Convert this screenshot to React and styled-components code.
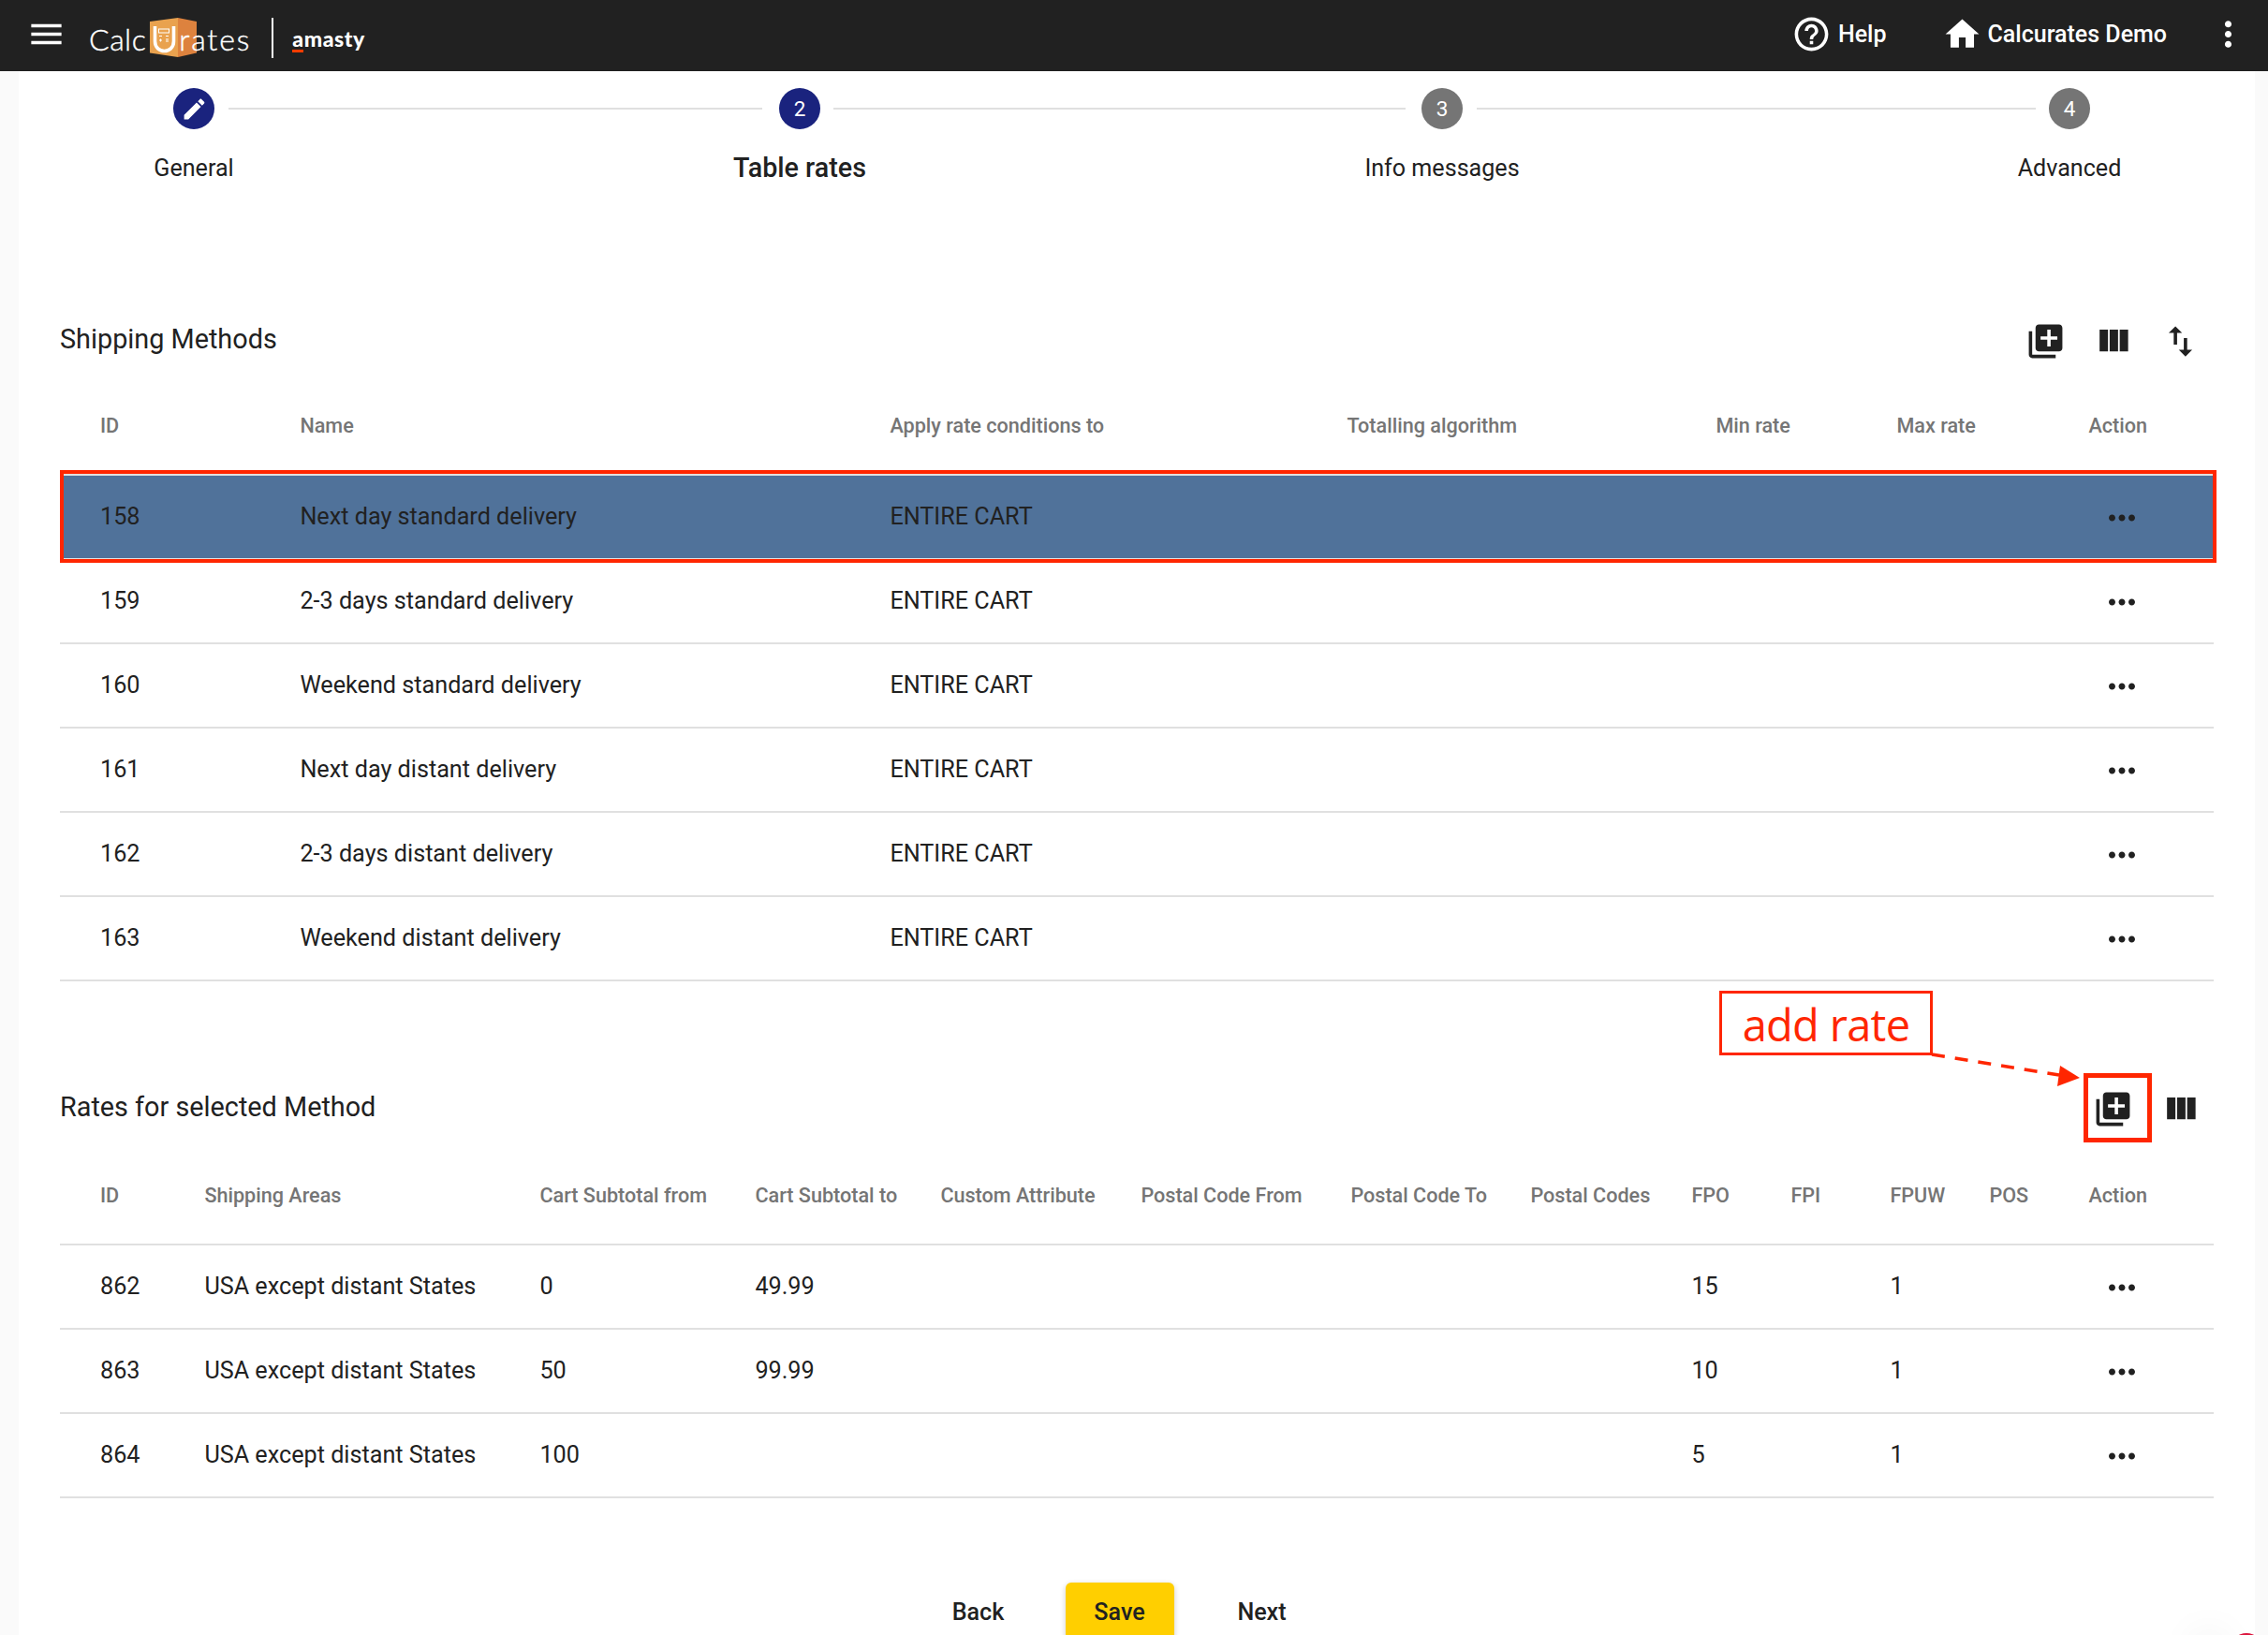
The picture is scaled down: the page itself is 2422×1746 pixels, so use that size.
import React from 'react'
import styled, { createGlobalStyle } from 'styled-components'

const GlobalStyle = createGlobalStyle`
  html, body { margin: 0; padding: 0; height: 100%; overflow: hidden; background: #fafafa; }
  body { font-family: Roboto, "Liberation Sans", sans-serif; color: #212121; }
`

const RED = '#ff2600'

const paths = {
  menu: 'M3 18h18v-2H3v2zm0-5h18v-2H3v2zm0-7v2h18V6H3z',
  help: 'M11 18h2v-2h-2v2zm1-16C6.48 2 2 6.48 2 12s4.48 10 10 10 10-4.48 10-10S17.52 2 12 2zm0 18c-4.41 0-8-3.59-8-8s3.59-8 8-8 8 3.59 8 8-3.59 8-8 8zm0-14c-2.21 0-4 1.79-4 4h2c0-1.1.9-2 2-2s2 .9 2 2c0 2-3 1.75-3 5h2c0-2.25 3-2.5 3-5 0-2.21-1.79-4-4-4z',
  home: 'M10 20v-6h4v6h5v-8h3L12 3 2 12h3v8z',
  moreVert: 'M12 8c1.1 0 2-.9 2-2s-.9-2-2-2-2 .9-2 2 .9 2 2 2zm0 2c-1.1 0-2 .9-2 2s.9 2 2 2 2-.9 2-2-.9-2-2-2zm0 6c-1.1 0-2 .9-2 2s.9 2 2 2 2-.9 2-2-.9-2-2-2z',
  moreHoriz: 'M6 10c-1.1 0-2 .9-2 2s.9 2 2 2 2-.9 2-2-.9-2-2-2zm12 0c-1.1 0-2 .9-2 2s.9 2 2 2 2-.9 2-2-.9-2-2-2zm-6 0c-1.1 0-2 .9-2 2s.9 2 2 2 2-.9 2-2-.9-2-2-2z',
  edit: 'M3 17.25V21h3.75L17.81 9.94l-3.75-3.75L3 17.25zM20.71 7.04c.39-.39.39-1.02 0-1.41l-2.34-2.34c-.39-.39-1.02-.39-1.41 0l-1.83 1.83 3.75 3.75 1.83-1.83z',
  libraryAdd: 'M4 6H2v14c0 1.1.9 2 2 2h14v-2H4V6zm16-4H8c-1.1 0-2 .9-2 2v12c0 1.1.9 2 2 2h12c1.1 0 2-.9 2-2V4c0-1.1-.9-2-2-2zm-1 9h-4v4h-2v-4H9V9h4V5h2v4h4v2z',
  viewColumn: 'M10 18h5V5h-5v13zm-6 0h5V5H4v13zM16 5v13h5V5h-5z',
  importExport: 'M9 3L5 6.99h3V14h2V6.99h3L9 3zm7 14.01V10h-2v7.01h-3L15 21l4-3.99h-3z',
}

const Svg = styled.svg`
  width: ${p => p.$size || 43}px;
  height: ${p => p.$size || 43}px;
  flex: none;
  display: block;
  fill: currentColor;
`

const Icon = ({ name, size }) => (
  <Svg viewBox="0 0 24 24" $size={size}><path d={paths[name]} /></Svg>
)

const Page = styled.div`
  width: 2422px;
  height: 1746px;
  overflow: hidden;
  position: relative;
  background: #fafafa;
`

const TopBar = styled.header`
  height: 76px;
  box-sizing: border-box;
  padding: 0 21px 3px 28px;
  background: #212121;
  color: #fff;
  display: flex;
  align-items: center;
`

const LogoRow = styled.div`
  display: flex;
  align-items: center;
  margin-left: 24px;
`

const LogoWord = styled.span`
  position: relative;
  font-family: Lato, sans-serif;
  font-weight: 300;
  -webkit-text-stroke: 0.4px #fff;
  font-size: 32px;
  letter-spacing: ${p => p.$spacing}px;
  line-height: 1;
  margin-top: 10px;
  margin-left: ${p => p.$offset || 0}px;
`

const Divider = styled.div`
  width: 2px;
  height: 43px;
  background: #fff;
  margin: 8px 20px 0 22px;
`

const Amasty = styled.span`
  position: relative;
  font-family: Lato, sans-serif;
  font-weight: 900;
  font-size: 23px;
  letter-spacing: 0.6px;
  line-height: 1;
  margin-top: 9px;
  &::after {
    content: '';
    position: absolute;
    left: 0;
    bottom: -3px;
    width: 12px;
    height: 3px;
    background: #ff3c00;
  }
`

const NavItem = styled.div`
  display: flex;
  align-items: center;
  gap: ${p => p.$gap}px;
  margin-left: ${p => p.$left};
  font-size: 25px;
  font-weight: 500;
`

const Sheet = styled.main`
  width: 2388px;
  height: 1670px;
  margin-left: 20px;
  padding: 18px 44px 0 44px;
  box-sizing: border-box;
  background: #fff;
`

const Stepper = styled.div`
  display: flex;
  align-items: flex-start;
  padding-left: 121px;
`

const Step = styled.div`
  width: 44px;
  flex: none;
  display: flex;
  flex-direction: column;
  align-items: center;
`

const StepDot = styled.div`
  width: 44px;
  height: 44px;
  border-radius: 50%;
  background: ${p => (p.$active ? '#1a237e' : '#757575')};
  color: #fff;
  display: flex;
  align-items: center;
  justify-content: center;
  font-size: 22.5px;
`

const StepLabel = styled.div`
  margin-top: ${p => (p.$current ? 27 : 28)}px;
  line-height: 28px;
  white-space: nowrap;
  font-size: ${p => (p.$current ? 28.7 : 25.1)}px;
  font-weight: ${p => (p.$current ? 500 : 400)};
`

const Connector = styled.div`
  width: ${p => p.$width}px;
  height: 2px;
  flex: none;
  margin: 21px ${p => p.$after}px 0 ${p => p.$before}px;
  background: #e0e0e0;
`

const SectionHead = styled.div`
  position: relative;
  height: 86px;
  margin-top: ${p => p.$top}px;
  display: flex;
  align-items: center;
  justify-content: space-between;
  padding-right: 14px;
`

const SectionTitle = styled.h2`
  margin: -4px 0 0;
  font-size: 28.8px;
  font-weight: 400;
`

const Tools = styled.div`
  display: flex;
  gap: 29px;
`

const ToolButton = styled.div`
  position: relative;
  color: #212121;
`

const HeadRow = styled.div`
  display: grid;
  grid-template-columns: ${p => p.$cols};
  align-items: center;
  height: ${p => p.$height}px;
  box-sizing: border-box;
  padding: 0 0 ${p => p.$pad}px 43px;
  border-bottom: 2px solid #e0e0e0;
  color: #757575;
  font-size: 21.6px;
  font-weight: 500;
`

const Row = styled.div`
  position: relative;
  display: grid;
  grid-template-columns: ${p => p.$cols};
  align-items: center;
  height: 90px;
  box-sizing: border-box;
  padding: 0 0 1px 43px;
  border-bottom: 2px solid #e0e0e0;
  font-size: 25.2px;
  background: ${p => (p.$selected ? '#50729a' : 'transparent')};
  ${p => p.$selected && `
    z-index: 1;
    &::after {
      content: '';
      position: absolute;
      inset: -6px -3px -5px 0;
      border: 4px solid ${RED};
      pointer-events: none;
    }
  `}
`

const Cell = styled.div`
  white-space: nowrap;
`

const Dots = styled.div`
  margin-left: 15px;
  margin-top: 3px;
  color: #212121;
`

const AddRate = styled.div`
  position: absolute;
  left: 1772px;
  top: -83px;
  width: 228px;
  height: 69px;
  box-sizing: border-box;
  padding-top: 2px;
  border: 3px solid ${RED};
  color: ${RED};
  font-family: "Open Sans", sans-serif;
  font-size: 47px;
  letter-spacing: -0.7px;
  display: flex;
  align-items: center;
  justify-content: center;
`

const ArrowSvg = styled.svg`
  position: absolute;
  left: 1999px;
  top: -15px;
  overflow: visible;
`

const Highlight = styled.div`
  position: absolute;
  left: -10px;
  top: -17px;
  width: 73px;
  height: 74px;
  box-sizing: border-box;
  border: 5px solid ${RED};
`

const Footer = styled.div`
  display: flex;
  justify-content: center;
  gap: 35px;
  margin-top: 90px;
  padding-right: 35px;
`

const ActionButton = styled.div`
  width: ${p => p.$width}px;
  height: 62px;
  box-sizing: border-box;
  display: flex;
  align-items: center;
  justify-content: center;
  border-radius: 6px;
  font-size: 25.1px;
  font-weight: 500;
  background: ${p => (p.$primary ? '#ffcf00' : 'transparent')};
  box-shadow: ${p => (p.$primary ? '0 2px 6px rgba(0,0,0,.2)' : 'none')};
`

const ChatBadge = styled.div`
  position: absolute;
  left: 2382px;
  top: 1744px;
  width: 34px;
  height: 34px;
  border-radius: 50%;
  background: #dc143c;
  box-shadow: -40px 0 40px rgba(0,0,0,.08);
`

const LogoMarkSvg = styled.svg`
  flex: none;
  margin: 7px 0 0 4px;
`

const LogoMark = () => (
  <LogoMarkSvg width="50" height="42" viewBox="0 0 50 42">
    <polygon points="0,4 30,0 30,42 0,37.5" fill="#e9a24f" />
    <polygon points="30,0 50,4 50,37.5 30,42" fill="#dd823e" />
    <path d="M5.5 9v16c0 14 20 14 20 0V9" fill="none" stroke="#fff" strokeWidth="3.6" />
    <rect x="9.5" y="12" width="11" height="4" fill="none" stroke="#fff" strokeWidth="1" />
    <path d="M10 19.5h3M17 19.5h3M10 24h3M11.5 22.5v3M17 23h3M17 25h3" stroke="#fff" strokeWidth="1" />
  </LogoMarkSvg>
)

const methodCols = '213.4px 630px 488px 394px 193px 205px 1fr'
const rateCols = '111.4px 358px 230px 198px 214px 224px 192px 172px 106px 106px 106px 106px 1fr'

const methodHead = ['ID', 'Name', 'Apply rate conditions to', 'Totalling algorithm', 'Min rate', 'Max rate', 'Action']
const rateHead = ['ID', 'Shipping Areas', 'Cart Subtotal from', 'Cart Subtotal to', 'Custom Attribute', 'Postal Code From', 'Postal Code To', 'Postal Codes', 'FPO', 'FPI', 'FPUW', 'POS', 'Action']

const methods = [
  [158, 'Next day standard delivery'],
  [159, '2-3 days standard delivery'],
  [160, 'Weekend standard delivery'],
  [161, 'Next day distant delivery'],
  [162, '2-3 days distant delivery'],
  [163, 'Weekend distant delivery'],
]

const rates = [
  [862, 'USA except distant States', '0', '49.99', '15', '1'],
  [863, 'USA except distant States', '50', '99.99', '10', '1'],
  [864, 'USA except distant States', '100', '', '5', '1'],
]

const steps = [
  { label: 'General', active: true, icon: true, line: [570, 15, 18] },
  { label: 'Table rates', active: true, current: true, line: [611, 14, 17] },
  { label: 'Info messages', line: [597, 15, 14] },
  { label: 'Advanced' },
]

export default function App() {
  return (
    <Page>
      <GlobalStyle />
      <TopBar>
        <Icon name="menu" />
        <LogoRow>
          <LogoWord $spacing={0.5}>Calc</LogoWord>
          <LogoMark />
          <LogoWord $spacing={1.9} $offset={-19}>rates</LogoWord>
          <Divider />
          <Amasty>amasty</Amasty>
        </LogoRow>
        <NavItem $gap={6.5} $left="auto"><Icon name="help" />Help</NavItem>
        <NavItem $gap={6} $left="59px"><Icon name="home" />Calcurates Demo</NavItem>
        <NavItem $gap={0} $left="44px"><Icon name="moreVert" /></NavItem>
      </TopBar>

      <Sheet>
        <Stepper>
          {steps.map((s, i) => (
            <React.Fragment key={s.label}>
              <Step>
                <StepDot $active={s.active}>
                  {s.icon ? <Icon name="edit" size={29} /> : i + 1}
                </StepDot>
                <StepLabel $current={s.current}>{s.label}</StepLabel>
              </Step>
              {s.line && <Connector $width={s.line[0]} $before={s.line[1]} $after={s.line[2]} />}
            </React.Fragment>
          ))}
        </Stepper>

        <SectionHead $top={127}>
          <SectionTitle>Shipping Methods</SectionTitle>
          <Tools>
            <ToolButton><Icon name="libraryAdd" /></ToolButton>
            <ToolButton><Icon name="viewColumn" /></ToolButton>
            <ToolButton><Icon name="importExport" /></ToolButton>
          </Tools>
        </SectionHead>
        <HeadRow $cols={methodCols} $height={101} $pad={5}>
          {methodHead.map(h => <Cell key={h}>{h}</Cell>)}
        </HeadRow>
        {methods.map(([id, name], i) => (
          <Row key={id} $cols={methodCols} $selected={i === 0}>
            <Cell>{id}</Cell>
            <Cell>{name}</Cell>
            <Cell>ENTIRE CART</Cell>
            <Cell /><Cell /><Cell />
            <Dots><Icon name="moreHoriz" size={42} /></Dots>
          </Row>
        ))}

        <SectionHead $top={93}>
          <SectionTitle>Rates for selected Method</SectionTitle>
          <AddRate>add rate</AddRate>
          <ArrowSvg width="160" height="30">
            <line x1="0" y1="0" x2="136" y2="22" stroke={RED} strokeWidth="3.5" strokeDasharray="14 11" />
            <polygon points="158,25 134,34 137,12" fill={RED} />
          </ArrowSvg>
          <Tools>
            <ToolButton>
              <Icon name="libraryAdd" />
              <Highlight />
            </ToolButton>
            <ToolButton><Icon name="viewColumn" /></ToolButton>
          </Tools>
        </SectionHead>
        <HeadRow $cols={rateCols} $height={103} $pad={3}>
          {rateHead.map(h => <Cell key={h}>{h}</Cell>)}
        </HeadRow>
        {rates.map(([id, area, from, to, fpo, fpuw]) => (
          <Row key={id} $cols={rateCols}>
            <Cell>{id}</Cell>
            <Cell>{area}</Cell>
            <Cell>{from}</Cell>
            <Cell>{to}</Cell>
            <Cell /><Cell /><Cell /><Cell />
            <Cell>{fpo}</Cell>
            <Cell />
            <Cell>{fpuw}</Cell>
            <Cell />
            <Dots><Icon name="moreHoriz" size={42} /></Dots>
          </Row>
        ))}

        <Footer>
          <ActionButton $width={116}>Back</ActionButton>
          <ActionButton $width={116} $primary>Save</ActionButton>
          <ActionButton $width={118}>Next</ActionButton>
        </Footer>
      </Sheet>
      <ChatBadge />
    </Page>
  )
}
